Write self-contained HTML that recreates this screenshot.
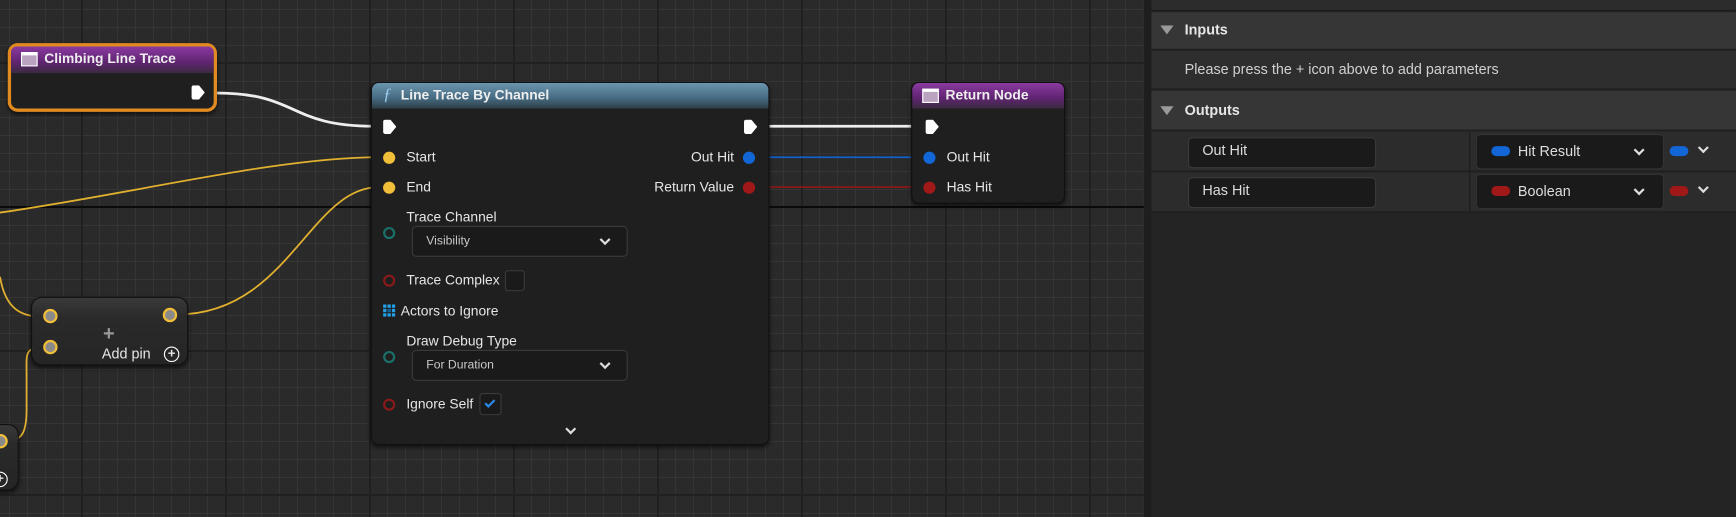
<!DOCTYPE html>
<html><head><meta charset="utf-8"><style>
*{box-sizing:border-box;margin:0;padding:0}
html,body{width:1736px;height:517px;overflow:hidden}
body{background-color:#2a2a2a;
background-image:
linear-gradient(#202020 0 2px,transparent 2px),
linear-gradient(90deg,#202020 0 2px,transparent 2px),
linear-gradient(#353535 0 1px,transparent 1px),
linear-gradient(90deg,#353535 0 1px,transparent 1px);
background-size:144px 144px,144px 144px,18px 18px,18px 18px;
background-position:0 62px,81px 0,0 9px,9px 0;
font-family:"Liberation Sans",sans-serif;color:#e6e6e6;position:relative}
#blk{position:absolute;left:0;top:206px;width:1151px;height:2px;background:#0a0a0a}
#w{position:absolute;left:0;top:0;width:1568px;height:467px;transform:scale(1.10714);transform-origin:0 0}
.abs{position:absolute}
.node{position:absolute;background:#1e1f1e;border-radius:7px;box-shadow:0 2px 4px rgba(0,0,0,.6);border:1px solid #111}
.hdr{position:absolute;left:0;right:0;top:0;height:23px;border-radius:6px 6px 0 0;font-weight:bold;font-size:12.5px;line-height:23px;padding-left:30px;color:#eee}
.pur{background:linear-gradient(#8a3aa0,#5f2470 60%,#3a2a40)}
.blu{background:linear-gradient(#6a95b0,#466a80 60%,#2e3e48)}
.ico{position:absolute;left:9px;top:5px;width:15px;height:13px;background:#b9a3c0;border:1px solid #fff;border-top-width:3px}
.t{position:absolute;font-size:12.5px;white-space:nowrap}
.pin{position:absolute;width:11px;height:11px;border-radius:50%}
.exec{position:absolute;width:12px;height:13px;background:#fff;clip-path:polygon(0 0,55% 0,100% 50%,55% 100%,0 100%);border-radius:2px}
.ring{position:absolute;width:11px;height:11px;border-radius:50%;border:2px solid}
.dd{position:absolute;background:#1a1a1a;border:1px solid #3a3a3a;border-radius:4px;font-size:11px;color:#c8c8c8;padding-left:12px}
.chev{position:absolute;width:7px;height:7px;border-right:2px solid #ddd;border-bottom:2px solid #ddd;transform:rotate(45deg)}
.row{position:absolute;left:1040px;width:528px}
</style></head><body>
<div id="blk"></div>
<div id="w">
<svg class="abs" style="left:0;top:0" width="1040" height="467">
<path d="M195 84 C270 84,260 114,337 114" stroke="#eee" stroke-width="2.5" fill="none"/>
<path d="M0 192 C120 175,250 142,342 142" stroke="#e0b02e" stroke-width="1.6" fill="none"/>
<path d="M342 169 C280 169,260 284,160 284" stroke="#e0b02e" stroke-width="1.6" fill="none"/>
<path d="M0 250 C5 280,20 286,38 286" stroke="#e0b02e" stroke-width="1.6" fill="none"/>
<path d="M38 314 C22 314,24 320,24 340 L24 370 C24 395,18 398,3 398" stroke="#e0b02e" stroke-width="1.6" fill="none"/>
<path d="M688 114 L836 114" stroke="#eee" stroke-width="2.5"/>
<path d="M682 142 L836 142" stroke="#1060c8" stroke-width="1.6"/>
<path d="M682 169 L836 169" stroke="#8a1818" stroke-width="1.6"/>
</svg>

<div class="node" style="left:7px;top:39px;width:189px;height:62px;border:3px solid #e08a20;border-radius:9px">
<div class="hdr pur" style="height:24px;padding-left:30px;border-radius:5px 5px 0 0">Climbing Line Trace</div>
<div class="ico" style="left:9px;top:5px"></div>
<div class="exec" style="left:163px;top:35px"></div>
</div>

<div class="node" style="left:335px;top:74px;width:360px;height:328px">
<div class="hdr blu" style="padding-left:26px"><span style="position:absolute;left:10px;font-style:italic;font-family:'Liberation Serif',serif;color:#9cd0f0;font-weight:normal;font-size:15px">ƒ</span>Line Trace By Channel</div>
<div class="exec" style="left:10px;top:33px"></div>
<div class="exec" style="left:336px;top:33px"></div>
<div class="pin" style="left:10px;top:62px;background:#f0be38"></div><div class="t" style="left:31px;top:60px">Start</div>
<div class="pin" style="left:10px;top:89px;background:#f0be38"></div><div class="t" style="left:31px;top:87px">End</div>
<div class="t" style="right:31px;top:60px">Out Hit</div><div class="pin" style="left:335px;top:62px;background:#1266d6"></div>
<div class="t" style="right:31px;top:87px">Return Value</div><div class="pin" style="left:335px;top:89px;background:#a01818"></div>
<div class="t" style="left:31px;top:114px">Trace Channel</div>
<div class="ring" style="left:10px;top:130px;border-color:#1a7068"></div>
<div class="dd" style="left:36px;top:129px;width:195px;height:28px;line-height:26px">Visibility<div class="chev" style="right:16px;top:8px"></div></div>
<div class="ring" style="left:10px;top:173px;border-color:#8a1a1a"></div><div class="t" style="left:31px;top:171px">Trace Complex</div>
<div class="abs" style="left:120px;top:169px;width:18px;height:19px;border:1px solid #3a3a3a;border-radius:3px;background:#1a1a1a"></div>
<svg class="abs" style="left:10px;top:200px" width="11" height="11"><g fill="#22a0e8"><rect x="0" y="0" width="3" height="3"/><rect x="4" y="0" width="3" height="3"/><rect x="8" y="0" width="3" height="3"/><rect x="0" y="4" width="3" height="3"/><rect x="8" y="4" width="3" height="3"/><rect x="0" y="8" width="3" height="3"/><rect x="4" y="8" width="3" height="3"/><rect x="8" y="8" width="3" height="3"/><rect x="4" y="4" width="3" height="3" fill="#1466a0"/></g></svg>
<div class="t" style="left:26px;top:199px">Actors to Ignore</div>
<div class="t" style="left:31px;top:226px">Draw Debug Type</div>
<div class="ring" style="left:10px;top:242px;border-color:#1a7068"></div>
<div class="dd" style="left:36px;top:241px;width:195px;height:28px;line-height:26px">For Duration<div class="chev" style="right:16px;top:8px"></div></div>
<div class="ring" style="left:10px;top:285px;border-color:#8a1a1a"></div><div class="t" style="left:31px;top:283px">Ignore Self</div>
<div class="abs" style="left:97px;top:280px;width:20px;height:20px;border:1px solid #3a3a3a;border-radius:3px;background:#1a1a1a"></div>
<div class="abs" style="left:104px;top:284px;width:5px;height:9px;border-right:2px solid #2a8ae8;border-bottom:2px solid #2a8ae8;transform:rotate(45deg)"></div>
<div class="chev" style="left:176px;top:309px"></div>
</div>

<div class="node" style="left:823px;top:74px;width:139px;height:110px">
<div class="hdr pur">Return Node</div>
<div class="ico"></div>
<div class="exec" style="left:12px;top:33px"></div>
<div class="pin" style="left:10px;top:62px;background:#1266d6"></div><div class="t" style="left:31px;top:60px">Out Hit</div>
<div class="pin" style="left:10px;top:89px;background:#a01818"></div><div class="t" style="left:31px;top:87px">Has Hit</div>
</div>

<div class="node" style="left:28px;top:268px;width:142px;height:62px;background:linear-gradient(#3a3a3a,#2a2a2a 30%,#252525);border-radius:10px">
<div class="abs" style="left:10px;top:10px;width:13px;height:13px;border-radius:50%;background:#8a8a8a;border:2px solid #f0be38"></div>
<div class="abs" style="left:10px;top:38px;width:13px;height:13px;border-radius:50%;background:#8a8a8a;border:2px solid #f0be38"></div>
<div class="abs" style="left:118px;top:9px;width:13px;height:13px;border-radius:50%;background:#8a8a8a;border:2px solid #f0be38"></div>
<div class="abs" style="left:64px;top:26px;color:#999;font-size:18px;font-weight:bold;line-height:12px">+</div>
<div class="t" style="left:63px;top:43px;font-size:13px">Add pin</div>
<div class="abs" style="left:119px;top:44px;width:14px;height:14px;border:1.5px solid #fff;border-radius:50%;text-align:center;font-size:12px;line-height:11px;font-weight:bold">+</div>
</div>

<div class="node" style="left:-20px;top:383px;width:37px;height:60px;background:linear-gradient(#3a3a3a,#2a2a2a 30%,#252525);border-radius:10px">
<div class="abs" style="left:13px;top:8px;width:13px;height:13px;border-radius:50%;background:#8a8a8a;border:2px solid #f0be38"></div>
<div class="abs" style="left:12px;top:42px;width:14px;height:14px;border:1.5px solid #fff;border-radius:50%;text-align:center;font-size:12px;line-height:11px;font-weight:bold">+</div>
</div>

<div class="abs" style="left:1033px;top:0;width:7px;height:467px;background:#1e1e1e"></div>
<div class="abs" style="left:1040px;top:0;width:528px;height:467px;background:#242424"></div>
<div class="row" style="top:0;height:10px;background:#2c2c2c;border-bottom:1px solid #1c1c1c"></div>
<div class="row" style="top:11px;height:34px;background:#363636;border-bottom:1px solid #1c1c1c"></div>
<div class="abs" style="left:1048px;top:23px;width:0;height:0;border-left:6px solid transparent;border-right:6px solid transparent;border-top:8px solid #9a9a9a"></div>
<div class="t" style="left:1070px;top:19px;font-weight:bold;font-size:13px">Inputs</div>
<div class="row" style="top:46px;height:35px;background:#2e2e2e;border-bottom:1px solid #1c1c1c"></div>
<div class="t" style="left:1070px;top:55px;font-size:13px;color:#d0d0d0">Please press the + icon above to add parameters</div>
<div class="row" style="top:82px;height:36px;background:#363636;border-bottom:1px solid #1c1c1c"></div>
<div class="abs" style="left:1048px;top:96px;width:0;height:0;border-left:6px solid transparent;border-right:6px solid transparent;border-top:8px solid #9a9a9a"></div>
<div class="t" style="left:1070px;top:92px;font-weight:bold;font-size:13px">Outputs</div>
<div class="row" style="top:119px;height:36px;background:#2c2c2c;border-bottom:1px solid #1c1c1c"></div>
<div class="row" style="top:156px;height:36px;background:#2c2c2c;border-bottom:1px solid #1c1c1c"></div>
<div class="abs" style="left:1327px;top:119px;width:1px;height:73px;background:#1c1c1c"></div>
<div class="dd" style="left:1073px;top:124px;width:170px;height:28px;line-height:22px;font-size:13px;color:#ddd">Out Hit</div>
<div class="dd" style="left:1073px;top:160px;width:170px;height:28px;line-height:22px;font-size:13px;color:#ddd">Has Hit</div>
<div class="dd" style="left:1333px;top:121px;width:170px;height:32px;line-height:30px;font-size:13px;color:#ddd;padding-left:37px;border-color:#333">Hit Result<div class="chev" style="right:18px;top:10px"></div></div>
<div class="dd" style="left:1333px;top:157px;width:170px;height:32px;line-height:30px;font-size:13px;color:#ddd;padding-left:37px;border-color:#333">Boolean<div class="chev" style="right:18px;top:10px"></div></div>
<div class="abs" style="left:1347px;top:132px;width:17px;height:9px;border-radius:5px;background:#1266d6"></div>
<div class="abs" style="left:1347px;top:168px;width:17px;height:9px;border-radius:5px;background:#a01818"></div>
<div class="abs" style="left:1508px;top:132px;width:17px;height:9px;border-radius:5px;background:#1266d6"></div>
<div class="abs" style="left:1508px;top:168px;width:17px;height:9px;border-radius:5px;background:#a01818"></div>
<div class="chev" style="left:1535px;top:130px"></div>
<div class="chev" style="left:1535px;top:166px"></div>
</div>
</body></html>
